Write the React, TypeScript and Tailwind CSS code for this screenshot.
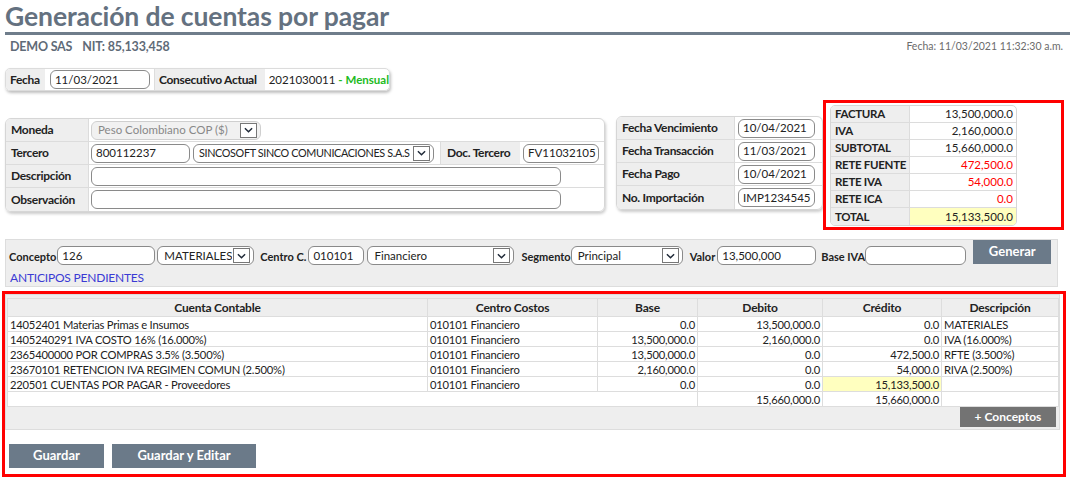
import React from 'react';

const Chevron = () => (
  <svg viewBox="0 0 10 6" className="w-[9px] h-[6px]">
    <path d="M1 1l4 4 4-4" fill="none" stroke="#1f2937" strokeWidth="1.6" />
  </svg>
);

function Input({ value = '', className = '' }: { value?: string; className?: string }) {
  return (
    <div className={`h-[19px] rounded-[6px] border border-[#8a8a8a] bg-white flex items-center px-[4px] text-[11.5px] text-[#222] whitespace-nowrap overflow-hidden shrink-0 ${className}`}>
      {value}
    </div>
  );
}

function Select({ value, className = '', muted = false, textClass = '' }: { value: string; className?: string; muted?: boolean; textClass?: string }) {
  return (
    <div
      className={`h-[19px] rounded-[6px] border flex items-center justify-between pl-[6px] pr-[3px] text-[11.5px] shrink-0 ${
        muted ? 'bg-[#f1f1f1] border-[#cfcfcf] text-[#888]' : 'bg-white border-[#8a8a8a] text-[#222]'
      } ${className}`}
    >
      <span className={`whitespace-nowrap overflow-hidden ${textClass}`}>{value}</span>
      <span className="w-[17px] h-[15px] border border-[#777] bg-white flex items-center justify-center shrink-0">
        <Chevron />
      </span>
    </div>
  );
}

const totals = [
  { label: 'FACTURA', value: '13,500,000.0' },
  { label: 'IVA', value: '2,160,000.0' },
  { label: 'SUBTOTAL', value: '15,660,000.0' },
  { label: 'RETE FUENTE', value: '472,500.0', red: true },
  { label: 'RETE IVA', value: '54,000.0', red: true },
  { label: 'RETE ICA', value: '0.0', red: true },
  { label: 'TOTAL', value: '15,133,500.0', total: true },
];

const rows = [
  ['14052401 Materias Primas e Insumos', '0.0', '13,500,000.0', '0.0', 'MATERIALES'],
  ['1405240291 IVA COSTO 16% (16.000%)', '13,500,000.0', '2,160,000.0', '0.0', 'IVA (16.000%)'],
  ['2365400000 POR COMPRAS 3.5% (3.500%)', '13,500,000.0', '0.0', '472,500.0', 'RFTE (3.500%)'],
  ['23670101 RETENCION IVA REGIMEN COMUN (2.500%)', '2,160,000.0', '0.0', '54,000.0', 'RIVA (2.500%)'],
  ['220501 CUENTAS POR PAGAR - Proveedores', '0.0', '0.0', '15,133,500.0', ''],
];

const lbl = 'bg-[#eeeeee] font-bold flex items-center whitespace-nowrap tracking-[-0.3px] text-[12px]';
const td = 'border border-[#dddddd] px-[2px] py-0 h-[15px]';

export default function App() {
  return (
    <div className="w-[1070px] h-[480px] bg-white font-['Lato',sans-serif] text-[#222] overflow-hidden">
      {/* title */}
      <div className="px-[5px] pt-[1px]">
        <h1 className="text-[26.5px] leading-[31px] font-bold text-[#647180] tracking-[-0.1px] whitespace-nowrap">Generación de cuentas por pagar</h1>
      </div>
      <div className="h-[3px] bg-[#6f7d8b] ml-[5px]" />
      <div className="flex justify-between items-start pl-[10px] pr-[7px] pt-[3px] h-[33px]">
        <div className="text-[12.5px] font-bold text-[#5f6b78] flex gap-[10px] tracking-[-0.2px]">
          <span>DEMO SAS</span>
          <span>NIT: 85,133,458</span>
        </div>
        <div className="text-[10.5px] text-[#6b6b6b] pt-[1px]">Fecha: 11/03/2021 11:32:30 a.m.</div>
      </div>

      {/* fecha / consecutivo */}
      <div className="ml-[5px] w-[385px] h-[23px] flex rounded-[5px] border border-[#dcdcdc] shadow-[1px_2px_3px_rgba(0,0,0,0.25)] overflow-hidden">
        <div className={`w-[40px] pl-[4px] ${lbl}`}>Fecha</div>
        <div className="w-[110px] flex items-center px-[5px] border-r border-[#ddd]">
          <Input value="11/03/2021" className="w-[100px]" />
        </div>
        <div className={`w-[113px] pl-[4px] ${lbl}`}>Consecutivo Actual</div>
        <div className="flex-1 flex items-center pl-[4px] text-[11.5px] whitespace-nowrap">
          2021030011&nbsp;<span className="text-[#22bb22] font-bold">- Mensual</span>
        </div>
      </div>

      {/* form row */}
      <div className="flex items-start mt-[9px]">
        <div className="ml-[5px] mt-[18px] w-[600px] rounded-[6px] border border-[#d6d6d6] shadow-[1px_2px_3px_rgba(0,0,0,0.2)] overflow-hidden">
          <div className="flex h-[23px] border-b border-[#dcdcdc]">
            <div className={`w-[83px] pl-[5px] border-r border-[#dcdcdc] ${lbl}`}>Moneda</div>
            <div className="flex items-center pl-[2px]">
              <Select value="Peso Colombiano COP ($)" muted className="w-[170px]" />
            </div>
          </div>
          <div className="flex h-[23px] border-b border-[#dcdcdc]">
            <div className={`w-[83px] pl-[5px] border-r border-[#dcdcdc] ${lbl}`}>Tercero</div>
            <div className="flex items-center pl-[2px] gap-[3px] w-[351px]">
              <Input value="800112237" className="w-[99px]" />
              <Select value="SINCOSOFT SINCO COMUNICACIONES S.A.S" className="w-[241px] !pl-[5px]" textClass="text-[10.8px] tracking-[-0.35px]" />
            </div>
            <div className={`w-[80px] pl-[6px] border-l border-[#dcdcdc] ${lbl}`}>Doc. Tercero</div>
            <div className="flex items-center pl-[3px]">
              <Input value="FV11032105" className="w-[76px]" />
            </div>
          </div>
          <div className="flex h-[23px] border-b border-[#dcdcdc]">
            <div className={`w-[83px] pl-[5px] border-r border-[#dcdcdc] ${lbl}`}>Descripción</div>
            <div className="flex items-center pl-[2px]">
              <Input className="w-[470px]" />
            </div>
          </div>
          <div className="flex h-[23px]">
            <div className={`w-[83px] pl-[5px] border-r border-[#dcdcdc] ${lbl}`}>Observación</div>
            <div className="flex items-center pl-[2px]">
              <Input className="w-[470px]" />
            </div>
          </div>
        </div>

        <div className="ml-[11px] mt-[16px] w-[207px] rounded-[6px] border border-[#d6d6d6] shadow-[1px_2px_3px_rgba(0,0,0,0.2)] overflow-hidden">
          {[
            ['Fecha Vencimiento', '10/04/2021'],
            ['Fecha Transacción', '11/03/2021'],
            ['Fecha Pago', '10/04/2021'],
            ['No. Importación', 'IMP1234545'],
          ].map(([l, v], i) => (
            <div key={l} className={`flex h-[23px] ${i < 3 ? 'border-b border-[#dcdcdc]' : ''}`}>
              <div className={`w-[118px] pl-[5px] border-r border-[#dcdcdc] ${lbl}`}>{l}</div>
              <div className="flex items-center pl-[3px]">
                <Input value={v} className="w-[77px]" />
              </div>
            </div>
          ))}
        </div>

        <div className="w-[241px] h-[130px] border-[3px] border-[#ff0000] pl-[4px] pt-[2px]">
          <div className="w-[187px] rounded-[5px] border border-[#d6d6d6] overflow-hidden">
            {totals.map((t, i) => (
              <div key={t.label} className={`flex h-[17px] ${i < totals.length - 1 ? 'border-b border-[#dcdcdc]' : ''}`}>
                <div className={`w-[79px] pl-[4px] border-r border-[#dcdcdc] ${lbl} !text-[11.5px]`}>{t.label}</div>
                <div
                  className={`flex-1 flex items-center justify-end pr-[3px] text-[11.5px] ${t.red ? 'text-[#ff0000]' : ''} ${
                    t.total ? 'bg-[#ffffbf]' : ''
                  }`}
                >
                  {t.value}
                </div>
              </div>
            ))}
          </div>
        </div>
      </div>

      {/* concepto */}
      <div className="ml-[5px] mt-[9px] w-[1053px] h-[48px] bg-[#eeeeee] border border-[#dddddd] pl-[3px] pr-[3px] pt-[2px] text-[11px]">
        <div className="flex items-end h-[23px] whitespace-nowrap">
          <span className="font-bold pr-[1px]">Concepto</span>
          <Input value="126" className="w-[98px]" />
          <Select value="MATERIALES" className="w-[97px] ml-[2px]" />
          <span className="font-bold ml-[6px] pr-[2px]">Centro C.</span>
          <Input value="010101" className="w-[56px]" />
          <Select value="Financiero" className="w-[147px] ml-[3px]" />
          <span className="font-bold ml-[7px]">Segmento</span>
          <Select value="Principal" className="w-[112px]" />
          <span className="font-bold ml-[7px] pr-[2px]">Valor</span>
          <Input value="13,500,000" className="w-[99px]" />
          <span className="font-bold ml-[5px]">Base IVA</span>
          <Input className="w-[101px]" />
          <div className="ml-[7px] mb-[1px] w-[78px] h-[24px] bg-[#6b7a89] text-white font-bold text-[13px] flex items-center justify-center">Generar</div>
        </div>
        <div className="text-[#3a3ad4] text-[12px] mt-[4px] tracking-[-0.2px] pl-[1px]">ANTICIPOS PENDIENTES</div>
      </div>

      {/* table section */}
      <div className="ml-[2px] mt-[4px] w-[1064px] h-[186px] border-[3px] border-[#ff0000]">
        <div className="w-[1055px] bg-[#eeeeee] border border-[#dddddd] px-[1px] pt-[3px] pb-[1px]">
          <table className="w-[1051px] border-collapse text-[11.2px] bg-white table-fixed tracking-[-0.2px] leading-[13px]">
            <colgroup>
              <col className="w-[420px]" />
              <col className="w-[170px]" />
              <col className="w-[100px]" />
              <col className="w-[125px]" />
              <col className="w-[119px]" />
              <col className="w-[117px]" />
            </colgroup>
            <thead>
              <tr className="bg-[#eeeeee] text-[12px]">
                {['Cuenta Contable', 'Centro Costos', 'Base', 'Debito', 'Crédito', 'Descripción'].map((h) => (
                  <th key={h} className="border border-[#dddddd] font-bold p-0 h-[18px] leading-[15px]">{h}</th>
                ))}
              </tr>
            </thead>
            <tbody>
              {rows.map((r, i) => (
                <tr key={i}>
                  <td className={`${td} whitespace-nowrap`}>{r[0]}</td>
                  <td className={td}>010101 Financiero</td>
                  <td className={`${td} text-right`}>{r[1]}</td>
                  <td className={`${td} text-right`}>{r[2]}</td>
                  <td className={`${td} text-right ${i === 4 ? 'bg-[#ffffbf]' : ''}`}>{r[3]}</td>
                  <td className={td}>{r[4]}</td>
                </tr>
              ))}
              <tr>
                <td colSpan={3} className={td} />
                <td className={`${td} text-right`}>15,660,000.0</td>
                <td className={`${td} text-right`}>15,660,000.0</td>
                <td className={td} />
              </tr>
            </tbody>
          </table>
          <div className="flex justify-end pr-[2px] pb-[1px]">
            <div className="w-[96px] h-[20px] bg-[#737373] text-white text-[12px] font-bold flex items-center justify-center">+ Conceptos</div>
          </div>
        </div>
        <div className="flex gap-[8px] pl-[4px] mt-[14px]">
          <div className="w-[95px] h-[24px] bg-[#6b7a89] text-white font-bold text-[13px] flex items-center justify-center">Guardar</div>
          <div className="w-[144px] h-[24px] bg-[#6b7a89] text-white font-bold text-[13px] flex items-center justify-center">Guardar y Editar</div>
        </div>
      </div>
    </div>
  );
}
